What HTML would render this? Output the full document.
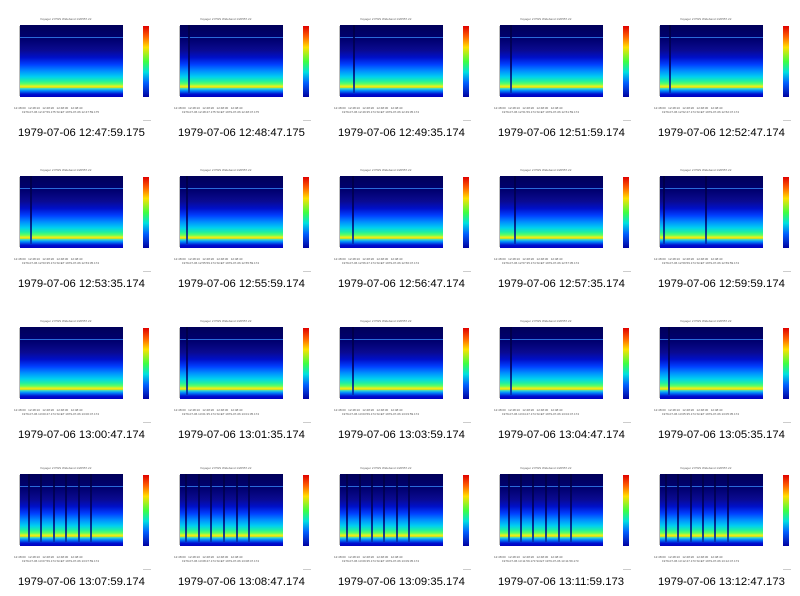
<!DOCTYPE html>
<html><head><meta charset="utf-8"><style>
html,body{margin:0;padding:0;background:#fff;width:800px;height:596px;overflow:hidden;position:relative;font-family:"Liberation Sans",sans-serif}
.c{position:absolute;width:160px;height:150px}
.p{position:absolute;left:20px;top:25px;width:103px;height:72px;background:linear-gradient(to bottom,#00005a 0%,#000070 20%,#0a0a90 35%,#0010c8 45%,#0040ff 55%,#0090ff 64%,#00d0f0 72%,#20f0a0 78%,#60ff60 82%,#e8f020 85%,#f0e000 86.5%,#40e0c0 88%,#0090ff 91%,#0010d0 96%,#0000c0 100%)}
.p i{position:absolute;top:0;bottom:4px;width:2px;background:linear-gradient(to bottom,#000040,#000060 60%,#0030b0);opacity:.85}
.p b{position:absolute;left:0;right:0;top:12px;height:1px;background:#2a6ad8}
.cb{position:absolute;left:143px;top:26px;width:6px;height:71px;background:linear-gradient(to bottom,#e00000,#ff6000 15%,#ffe000 30%,#40ff40 50%,#00e0e0 65%,#0060ff 80%,#0000a0 100%)}
.t{position:absolute;left:40px;top:17px;font-size:3px;color:#666;white-space:nowrap}
.ax{position:absolute;left:14px;top:106px;font-size:3px;color:#555;white-space:nowrap}
.ax2{position:absolute;left:22px;top:110px;font-size:3px;color:#555;white-space:nowrap}
.yl{position:absolute;left:16px;width:3px;height:70px;top:26px;border-right:1px solid #bbb}
.lbl{position:absolute;left:18px;top:127px;font-size:11.3px;color:#000;white-space:nowrap}
.sm{position:absolute;left:143px;top:120px;width:8px;height:1px;background:#ccc}
</style></head><body>
<div id="g"></div>
<script>
var L=["12:47:59.175","12:48:47.175","12:49:35.174","12:51:59.174","12:52:47.174","12:53:35.174","12:55:59.174","12:56:47.174","12:57:35.174","12:59:59.174","13:00:47.174","13:01:35.174","13:03:59.174","13:04:47.174","13:05:35.174","13:07:59.174","13:08:47.174","13:09:35.174","13:11:59.173","13:12:47.173"];
var S=[[],[8],[13],[10],[9],[10],[6],[12],[14],[3,45],[],[6],[12],[10],[8],[8,20,33,45,58,70],[5,18,30,43,56,68],[6,19,31,43,56,68],[8,20,32,45,58,70],[5,17,30,42,54,67]];
var tops=[0,151,302,449],h="";
for(var r=0;r<4;r++)for(var c=0;c<5;c++){var k=r*5+c,st="";
for(var j=0;j<S[k].length;j++)st+='<i style="left:'+S[k][j]+'px"></i>';
h+='<div class="c" style="left:'+(c*160)+'px;top:'+tops[r]+'px"><div class="t">Voyager 2 PWS Wideband 1/20557.22</div><div class="yl"></div><div class="p"><b></b>'+st+'</div><div class="cb"></div><div class="ax">12:48:00 &nbsp; 12:48:10 &nbsp; 12:48:20 &nbsp; 12:48:30 &nbsp; 12:48:40</div><div class="ax2">1979-07-06 '+L[k]+' SCET 1979-07-06 '+L[k]+'</div><div class="sm"></div><div class="lbl">1979-07-06 '+L[k]+'</div></div>';}
document.getElementById("g").innerHTML=h;
</script>
</body></html>
